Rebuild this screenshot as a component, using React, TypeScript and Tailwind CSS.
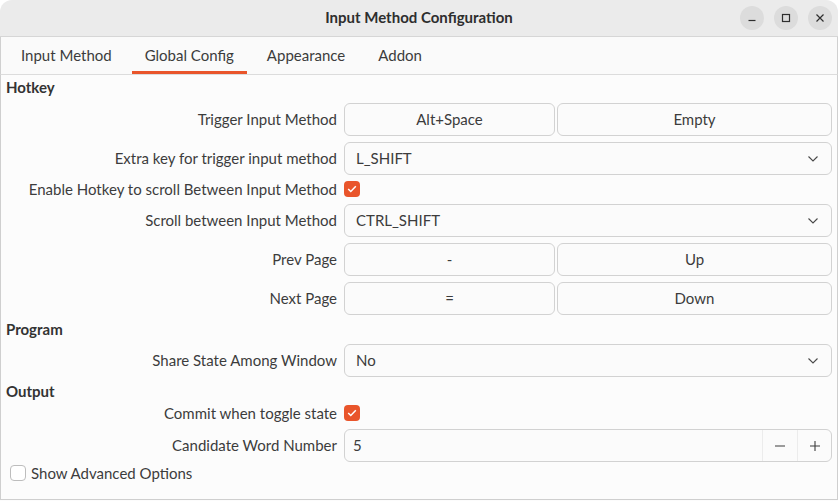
import type { ReactNode } from 'react';

const font = { fontFamily: 'Lato, "Noto Sans", sans-serif' };

function Chevron() {
  return (
    <svg width="12" height="8" viewBox="0 0 12 8" className="text-[#4a4a4a]">
      <path d="M1.5 1.5 L6 6 L10.5 1.5" fill="none" stroke="currentColor" strokeWidth="1.1" />
    </svg>
  );
}

function Check({ checked }: { checked: boolean }) {
  if (!checked) {
    return <span className="block w-[16px] h-[16px] rounded-[4px] border border-[#bdbdbd] bg-white" />;
  }
  return (
    <span className="flex items-center justify-center w-[16px] h-[16px] rounded-[4px] bg-[#e9552b]">
      <svg width="10" height="8" viewBox="0 0 10 8">
        <path d="M1.2 4 L3.8 6.5 L8.8 1.3" fill="none" stroke="white" strokeWidth="1.5" />
      </svg>
    </span>
  );
}

function Row({ label, children, h = 'h-[33px]', mt }: { label: string; children: ReactNode; h?: string; mt: string }) {
  return (
    <div className={`grid grid-cols-[331px_1fr] gap-x-[7px] items-center ${h} ${mt}`}>
      <div className="text-right text-[15px] text-[#3c3c3c] leading-none">{label}</div>
      <div className="flex items-center h-full">{children}</div>
    </div>
  );
}

function Btn({ text }: { text: string }) {
  return (
    <div className="flex-1 h-full flex items-center justify-center rounded-[6px] border border-[#d2d2d2] bg-[#fbfbfb] text-[15px] text-[#3c3c3c]">
      {text}
    </div>
  );
}

function Pair({ a, b }: { a: string; b: string }) {
  return (
    <div className="flex w-full h-full gap-[2px]">
      <div className="w-[211px] h-full flex"><Btn text={a} /></div>
      <Btn text={b} />
    </div>
  );
}

function Combo({ value }: { value: string }) {
  return (
    <div className="w-full h-full flex items-center justify-between pl-[11px] pr-[12px] rounded-[6px] border border-[#d2d2d2] bg-[#fbfbfb] text-[15px] text-[#3c3c3c]">
      <span>{value}</span>
      <Chevron />
    </div>
  );
}

function Heading({ text, mt }: { text: string; mt: string }) {
  return <div className={`h-[20px] flex items-center font-bold text-[15px] text-[#333] ${mt}`}>{text}</div>;
}

export default function App() {
  const tabs = ['Input Method', 'Global Config', 'Appearance', 'Addon'];
  return (
    <div className="w-[838px] h-[501px] bg-white overflow-hidden" style={font}>
      <div className="h-full flex flex-col rounded-t-[12px] overflow-hidden bg-[#fcfcfc]">
        {/* Title bar */}
        <div className="h-[37px] shrink-0 relative flex items-center justify-center bg-[#ebebeb] border-b border-[#d6d6d6]">
          <span className="font-bold text-[15px] text-[#2e2e2e] pb-[1px]">Input Method Configuration</span>
          <div className="absolute right-[6px] top-[6px] flex gap-[10px]">
            <span className="w-[24px] h-[24px] rounded-full bg-[#dcdcdc] flex items-center justify-center">
              <svg width="10" height="10" viewBox="0 0 10 10"><path d="M1.5 7.5 H8.5" stroke="#2e2e2e" strokeWidth="1.2" /></svg>
            </span>
            <span className="w-[24px] h-[24px] rounded-full bg-[#dcdcdc] flex items-center justify-center">
              <svg width="10" height="10" viewBox="0 0 10 10"><rect x="1.5" y="1.5" width="7" height="7" fill="none" stroke="#2e2e2e" strokeWidth="1.2" /></svg>
            </span>
            <span className="w-[24px] h-[24px] rounded-full bg-[#dcdcdc] flex items-center justify-center">
              <svg width="10" height="10" viewBox="0 0 10 10"><path d="M1.5 1.5 L8.5 8.5 M8.5 1.5 L1.5 8.5" stroke="#2e2e2e" strokeWidth="1.2" /></svg>
            </span>
          </div>
        </div>

        {/* Tabs */}
        <div className="h-[38px] shrink-0 flex gap-[7px] pl-[7px] bg-[#fafafa] border-b border-[#dcdcdc] border-x border-x-[#d0d0d0]">
          {tabs.map((t) => (
            <div
              key={t}
              className={`px-[13px] flex items-center text-[15px] text-[#3c3c3c] border-b-[3px] ${t === 'Global Config' ? 'border-[#e9552b]' : 'border-transparent'} pt-[3px]`}
            >
              {t}
            </div>
          ))}
        </div>

        {/* Content */}
        <div className="flex-1 flex flex-col pl-[5px] pr-[5px] border-x border-b border-[#cfcfcf] mb-[1px] bg-[#fcfcfc]">
          <Heading text="Hotkey" mt="mt-[2px]" />
          <Row label="Trigger Input Method" mt="mt-[6px]"><Pair a="Alt+Space" b="Empty" /></Row>
          <Row label="Extra key for trigger input method" mt="mt-[6px]"><Combo value="L_SHIFT" /></Row>
          <Row label="Enable Hotkey to scroll Between Input Method" h="h-[16px]" mt="mt-[6px]"><Check checked /></Row>
          <Row label="Scroll between Input Method" mt="mt-[7px]"><Combo value="CTRL_SHIFT" /></Row>
          <Row label="Prev Page" mt="mt-[6px]"><Pair a="-" b="Up" /></Row>
          <Row label="Next Page" mt="mt-[6px]"><Pair a="=" b="Down" /></Row>

          <Heading text="Program" mt="mt-[4px]" />
          <Row label="Share State Among Window" mt="mt-[5px]"><Combo value="No" /></Row>

          <Heading text="Output" mt="mt-[4px]" />
          <Row label="Commit when toggle state" h="h-[16px]" mt="mt-[4px]"><Check checked /></Row>
          <Row label="Candidate Word Number" mt="mt-[8px]">
            <div className="w-full h-full flex rounded-[6px] border border-[#d2d2d2] bg-[#fbfbfb] text-[15px] text-[#3c3c3c] overflow-hidden">
              <div className="flex-1 flex items-center pl-[8px]">5</div>
              <div className="w-[35px] flex items-center justify-center border-l border-[#ececec]">
                <svg width="12" height="12" viewBox="0 0 12 12"><path d="M1 6 H11" stroke="#3c3c3c" strokeWidth="1.1" /></svg>
              </div>
              <div className="w-[34px] flex items-center justify-center border-l border-[#ececec]">
                <svg width="12" height="12" viewBox="0 0 12 12"><path d="M1 6 H11 M6 1 V11" stroke="#3c3c3c" strokeWidth="1.1" /></svg>
              </div>
            </div>
          </Row>
          <div className="mt-[3px] flex items-center gap-[5px] pl-[4px] h-[16px]">
            <Check checked={false} />
            <span className="text-[15px] text-[#3c3c3c]">Show Advanced Options</span>
          </div>
        </div>
      </div>
    </div>
  );
}
